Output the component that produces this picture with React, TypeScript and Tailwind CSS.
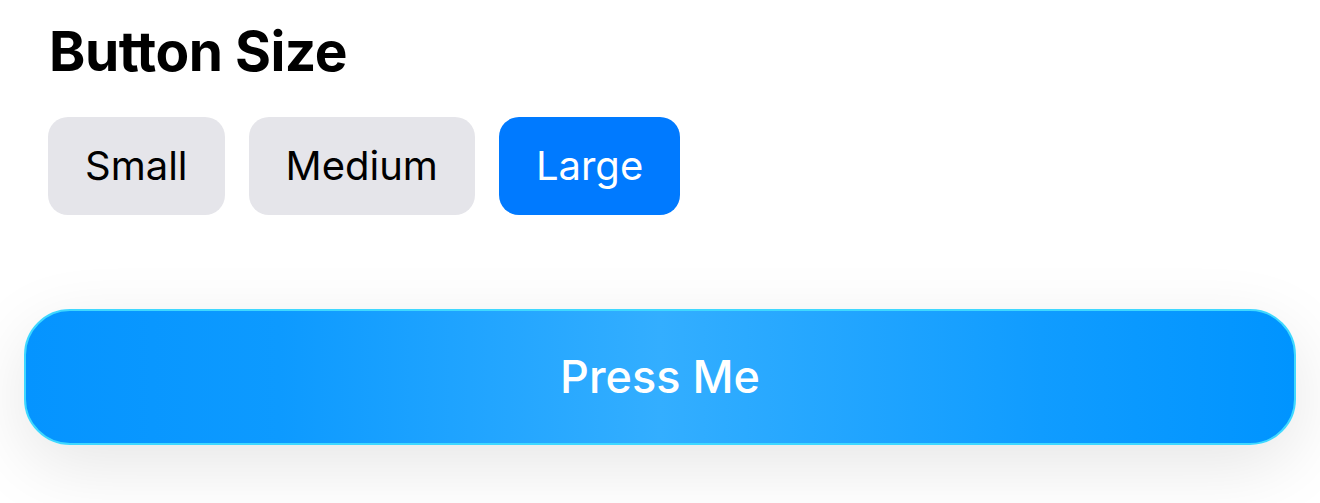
import React, { useState } from "react";

const sizes = ["Small", "Medium", "Large"];

export default function App() {
  const [size, setSize] = useState("Large");
  const [count, setCount] = useState(0);

  return (
    <div
      className="w-[1320px] h-[503px] overflow-hidden bg-white"
      style={{ fontFamily: "Inter, 'Noto Sans', sans-serif" }}
    >
      <div className="px-[48px] pt-[18px]">
        <h2 className="text-[55px] leading-[66px] font-bold text-black tracking-[-0.5px] pl-[1px]">
          Button Size
        </h2>
        <div className="flex gap-[24px] mt-[33px]">
          {sizes.map((s) => (
            <button
              key={s}
              onClick={() => setSize(s)}
              className={`h-[98px] px-[37px] rounded-[20px] text-[40px] ${
                size === s ? "bg-[#007aff] text-white" : "bg-[#e5e5ea] text-black"
              }`}
            >
              {s}
            </button>
          ))}
        </div>
      </div>

      <div className="px-[24px] mt-[94px]">
        <button
          onClick={() => setCount(count + 1)}
          className="w-full h-[136px] rounded-[46px] border-2 border-[#3fd8ff] bg-[linear-gradient(90deg,#0594ff_0%,#0d9aff_20%,#33aeff_50%,#109cff_80%,#0094ff_100%)] text-white text-[45px] font-medium shadow-[0_20px_70px_rgba(0,0,0,0.1)]"
        >
          Press Me
        </button>
      </div>

      <p className="mt-[51px] text-center text-[30px] text-[#8e8e93]">
        Tapped {count} times
      </p>
    </div>
  );
}
